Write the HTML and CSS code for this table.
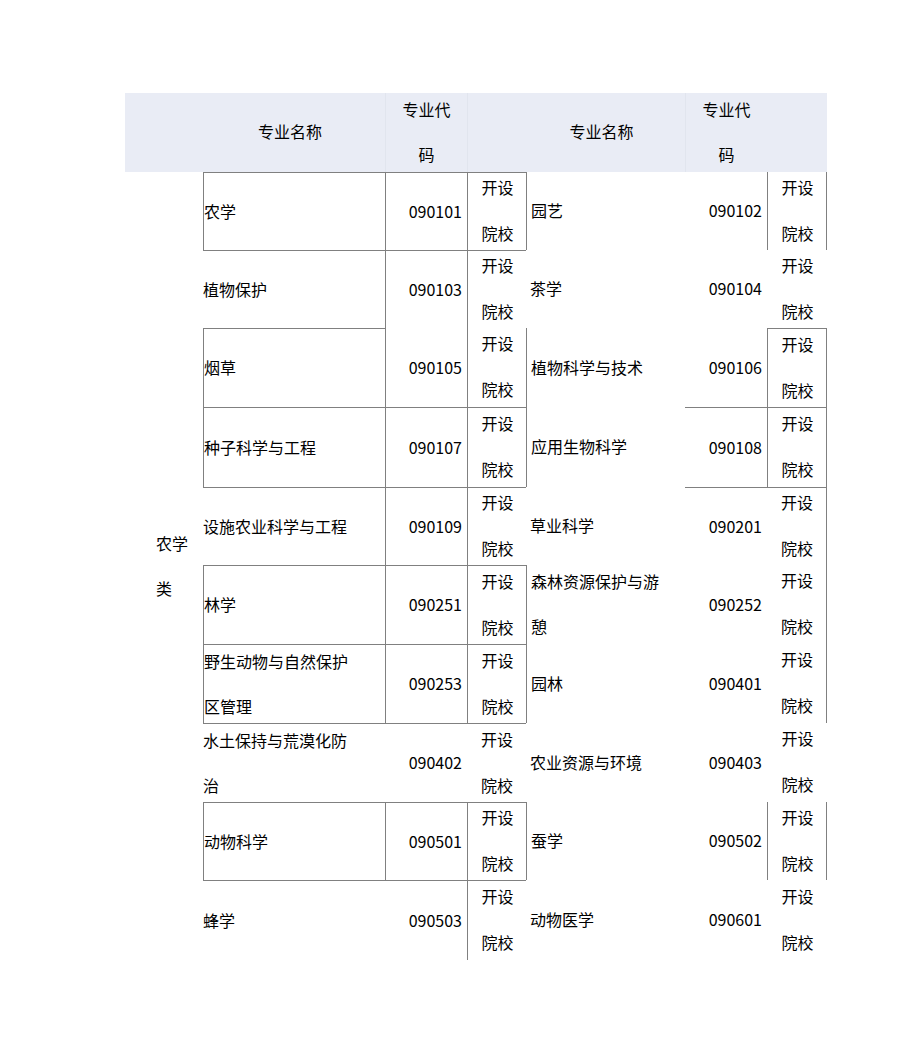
FILE: index.html
```html
<!DOCTYPE html>
<html lang="zh-CN">
<head>
<meta charset="utf-8">
<title>农学类专业</title>
<link rel="stylesheet" href="styles.css">
</head>
<body>
<div class="page">
  <div class="grid">
    <div class="c hd"></div>
    <div class="c hd hname">专业名称</div>
    <div class="c hd hcode hsep">专业代<br>码</div>
    <div class="c hd hsep"></div>
    <div class="c hd hname">专业名称</div>
    <div class="c hd hcode hsep">专业代<br>码</div>
    <div class="c hd"></div>

    <div class="c cat">农学<br>类</div>

    <!-- row 1 -->
    <div class="c name t l">农学</div>
    <div class="c code t l">090101</div>
    <div class="c link t l">开设<br>院校</div>
    <div class="c name2 l">园艺</div>
    <div class="c code2">090102</div>
    <div class="c link l r">开设<br>院校</div>

    <!-- row 2 -->
    <div class="c name t">植物保护</div>
    <div class="c code t l">090103</div>
    <div class="c link t l">开设<br>院校</div>
    <div class="c name2">茶学</div>
    <div class="c code2">090104</div>
    <div class="c link">开设<br>院校</div>

    <!-- row 3 -->
    <div class="c name t l">烟草</div>
    <div class="c code l">090105</div>
    <div class="c link l">开设<br>院校</div>
    <div class="c name2 l">植物科学与技术</div>
    <div class="c code2">090106</div>
    <div class="c link t l r">开设<br>院校</div>

    <!-- row 4 -->
    <div class="c name t l">种子科学与工程</div>
    <div class="c code t l">090107</div>
    <div class="c link t l">开设<br>院校</div>
    <div class="c name2 l">应用生物科学</div>
    <div class="c code2 t">090108</div>
    <div class="c link t l r">开设<br>院校</div>

    <!-- row 5 -->
    <div class="c name t">设施农业科学与工程</div>
    <div class="c code t l">090109</div>
    <div class="c link t l">开设<br>院校</div>
    <div class="c name2">草业科学</div>
    <div class="c code2 t">090201</div>
    <div class="c link t r">开设<br>院校</div>

    <!-- row 6 -->
    <div class="c name t l">林学</div>
    <div class="c code t l">090251</div>
    <div class="c link t l">开设<br>院校</div>
    <div class="c name2 l">森林资源保护与游<br>憩</div>
    <div class="c code2">090252</div>
    <div class="c link r">开设<br>院校</div>

    <!-- row 7 -->
    <div class="c name t l">野生动物与自然保护<br>区管理</div>
    <div class="c code t l">090253</div>
    <div class="c link t l">开设<br>院校</div>
    <div class="c name2 l">园林</div>
    <div class="c code2">090401</div>
    <div class="c link r">开设<br>院校</div>

    <!-- row 8 -->
    <div class="c name t">水土保持与荒漠化防<br>治</div>
    <div class="c code t">090402</div>
    <div class="c link t">开设<br>院校</div>
    <div class="c name2">农业资源与环境</div>
    <div class="c code2">090403</div>
    <div class="c link">开设<br>院校</div>

    <!-- row 9 -->
    <div class="c name t l">动物科学</div>
    <div class="c code t l">090501</div>
    <div class="c link t l">开设<br>院校</div>
    <div class="c name2 l">蚕学</div>
    <div class="c code2">090502</div>
    <div class="c link l r">开设<br>院校</div>

    <!-- row 10 -->
    <div class="c name t">蜂学</div>
    <div class="c code t">090503</div>
    <div class="c link t l">开设<br>院校</div>
    <div class="c name2">动物医学</div>
    <div class="c code2">090601</div>
    <div class="c link">开设<br>院校</div>
  </div>
</div>
</body>
</html>
```

FILE: styles.css
```css
* { box-sizing: border-box; }

html, body {
  margin: 0;
  padding: 0;
  background: #ffffff;
}

body {
  font-family: "Noto Sans CJK SC", "Noto Sans", sans-serif;
  font-size: 16px;
  color: #000000;
}

.page {
  padding: 93px 0 0 125px;
}

.grid {
  display: grid;
  grid-template-columns: 78px 182px 82px 59px 159px 82px 60px;
  grid-template-rows: 79px 78px 78px 79px 80px 78px 79px 79px 79px 78px 80px;
  width: 702px;
}

.c {
  display: flex;
  align-items: center;
  line-height: 45px;
  white-space: nowrap;
  min-width: 0;
  min-height: 0;
  padding-bottom: 1px;
}

.hd {
  background: #e9ecf5;
  justify-content: center;
  text-align: center;
  padding-bottom: 2px;
}

.hname {
  padding-right: 8px;
}

.hsep {
  border-left: 1px solid #e1e5ee;
}

.cat {
  grid-column: 1;
  grid-row: 2 / span 10;
  padding-left: 31px;
  padding-bottom: 1px;
}

.name {
  padding-left: 0;
}

.name2 {
  padding-left: 4px;
}

.code, .code2 {
  justify-content: flex-end;
  padding-right: 5px;
}

.link {
  justify-content: center;
  text-align: center;
  padding-left: 1px;
  line-height: 46px;
  padding-bottom: 3px;
}

.t { border-top: 1px solid #808080; }
.l { border-left: 1px solid #808080; }
.r { border-right: 1px solid #808080; }
```
